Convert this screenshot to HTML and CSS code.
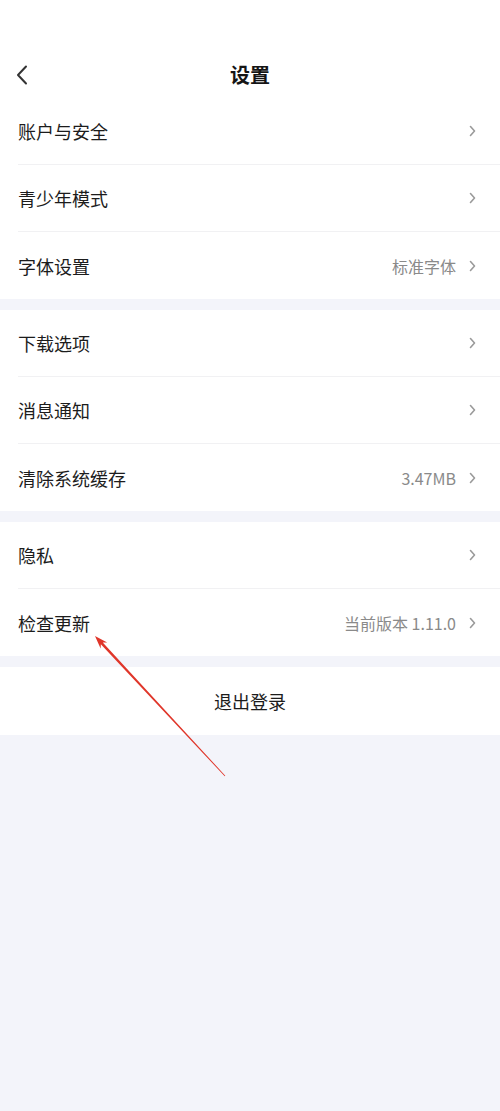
FILE: index.html
```html
<!DOCTYPE html>
<html lang="zh">
<head>
<meta charset="utf-8">
<link rel="stylesheet" href="styles.css">
</head>
<body>
<div class="page">
  <header class="header">
    <svg class="back" width="12" height="20" viewBox="0 0 12 20"><path d="M10 1.5 L2 10 L10 18.5" fill="none" stroke="#333" stroke-width="2" stroke-linecap="round" stroke-linejoin="round"/></svg>
    <div class="title">设置</div>
  </header>

  <section class="group">
    <div class="row"><span class="label">账户与安全</span><span class="right"><svg class="chev" width="7" height="12" viewBox="0 0 7 12"><path d="M1.5 1.5 L5.5 6 L1.5 10.5" fill="none" stroke="#9a9a9a" stroke-width="1.6" stroke-linecap="round" stroke-linejoin="round"/></svg></span></div>
    <div class="row"><span class="label">青少年模式</span><span class="right"><svg class="chev" width="7" height="12" viewBox="0 0 7 12"><path d="M1.5 1.5 L5.5 6 L1.5 10.5" fill="none" stroke="#9a9a9a" stroke-width="1.6" stroke-linecap="round" stroke-linejoin="round"/></svg></span></div>
    <div class="row"><span class="label">字体设置</span><span class="right"><span class="value">标准字体</span><svg class="chev" width="7" height="12" viewBox="0 0 7 12"><path d="M1.5 1.5 L5.5 6 L1.5 10.5" fill="none" stroke="#9a9a9a" stroke-width="1.6" stroke-linecap="round" stroke-linejoin="round"/></svg></span></div>
  </section>

  <section class="group">
    <div class="row"><span class="label">下载选项</span><span class="right"><svg class="chev" width="7" height="12" viewBox="0 0 7 12"><path d="M1.5 1.5 L5.5 6 L1.5 10.5" fill="none" stroke="#9a9a9a" stroke-width="1.6" stroke-linecap="round" stroke-linejoin="round"/></svg></span></div>
    <div class="row"><span class="label">消息通知</span><span class="right"><svg class="chev" width="7" height="12" viewBox="0 0 7 12"><path d="M1.5 1.5 L5.5 6 L1.5 10.5" fill="none" stroke="#9a9a9a" stroke-width="1.6" stroke-linecap="round" stroke-linejoin="round"/></svg></span></div>
    <div class="row"><span class="label">清除系统缓存</span><span class="right"><span class="value">3.47MB</span><svg class="chev" width="7" height="12" viewBox="0 0 7 12"><path d="M1.5 1.5 L5.5 6 L1.5 10.5" fill="none" stroke="#9a9a9a" stroke-width="1.6" stroke-linecap="round" stroke-linejoin="round"/></svg></span></div>
  </section>

  <section class="group">
    <div class="row"><span class="label">隐私</span><span class="right"><svg class="chev" width="7" height="12" viewBox="0 0 7 12"><path d="M1.5 1.5 L5.5 6 L1.5 10.5" fill="none" stroke="#9a9a9a" stroke-width="1.6" stroke-linecap="round" stroke-linejoin="round"/></svg></span></div>
    <div class="row"><span class="label">检查更新</span><span class="right"><span class="value">当前版本 1.11.0</span><svg class="chev" width="7" height="12" viewBox="0 0 7 12"><path d="M1.5 1.5 L5.5 6 L1.5 10.5" fill="none" stroke="#9a9a9a" stroke-width="1.6" stroke-linecap="round" stroke-linejoin="round"/></svg></span></div>
  </section>

  <section class="logout">退出登录</section>

  <svg class="arrow" width="500" height="1111" viewBox="0 0 500 1111">
    <polygon points="95,636 107.2,642.4 102.75,642.4 225.3,775.7 224.7,776.3 100.85,644.2 100.6,648.6" fill="#e0362a"/>
  </svg>
</div>
</body>
</html>
```

FILE: styles.css
```css
html, body {
  margin: 0;
  padding: 0;
}
body {
  background: #f3f4fa;
  font-family: "Noto Sans CJK SC", "Noto Sans", sans-serif;
  color: #1c1c1c;
}
.page {
  position: relative;
  width: 500px;
  min-height: 1111px;
  background: #f3f4fa;
  display: flex;
  flex-direction: column;
  gap: 11px;
}
.header {
  height: 98px;
  background: #fff;
  position: relative;
  display: flex;
  align-items: flex-start;
  justify-content: center;
  margin-bottom: -11px;
}
.back {
  position: absolute;
  left: 16px;
  top: 65px;
}
.title {
  margin-top: 60px;
  font-size: 20px;
  line-height: 30px;
  font-weight: 700;
  color: #151515;
}
.group {
  background: #fff;
  display: flex;
  flex-direction: column;
}
.row {
  height: 67px;
  box-sizing: border-box;
  margin-left: 18px;
  padding-right: 24px;
  display: flex;
  align-items: center;
  justify-content: space-between;
  border-bottom: 1px solid #f1f1f3;
}
.row:last-child {
  border-bottom: none;
}
.label {
  font-size: 18px;
  line-height: 26px;
  color: #1c1c1c;
}
.right {
  display: flex;
  align-items: center;
  gap: 13px;
}
.value {
  font-size: 16px;
  color: #8a8a8a;
}
.chev {
  display: block;
}
.logout {
  height: 68px;
  background: #fff;
  display: flex;
  align-items: center;
  justify-content: center;
  font-size: 18px;
  color: #1c1c1c;
}
.arrow {
  position: absolute;
  left: 0;
  top: 0;
  pointer-events: none;
}
```
